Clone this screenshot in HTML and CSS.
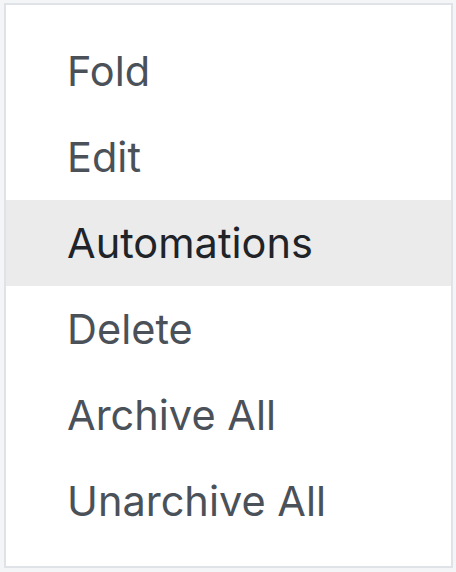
FILE: index.html
```html
<!DOCTYPE html>
<html>
<head>
<meta charset="utf-8">
<link rel="stylesheet" href="styles.css">
</head>
<body>
<ul class="menu">
  <li class="item">Fold</li>
  <li class="item">Edit</li>
  <li class="item active">Automations</li>
  <li class="item">Delete</li>
  <li class="item">Archive All</li>
  <li class="item">Unarchive All</li>
</ul>
</body>
</html>
```
FILE: styles.css
```css
html, body {
  margin: 0;
  background: #f4f5f7;
}
body {
  padding: 3px 3px 4px 4px;
  height: 572px;
  box-sizing: border-box;
}
.menu {
  list-style: none;
  margin: 0;
  padding: 23px 0 21px;
  height: 100%;
  box-sizing: border-box;
  background: #fff;
  border: 2px solid #dfe3e8;
  font-family: Inter, "Liberation Sans", sans-serif;
  font-size: 41.5px;
  color: #4b5159;
}
.item {
  height: 86px;
  display: flex;
  align-items: center;
  padding-left: 61px;
}
.item.active {
  background: #ebebeb;
  color: #202328;
}
```
